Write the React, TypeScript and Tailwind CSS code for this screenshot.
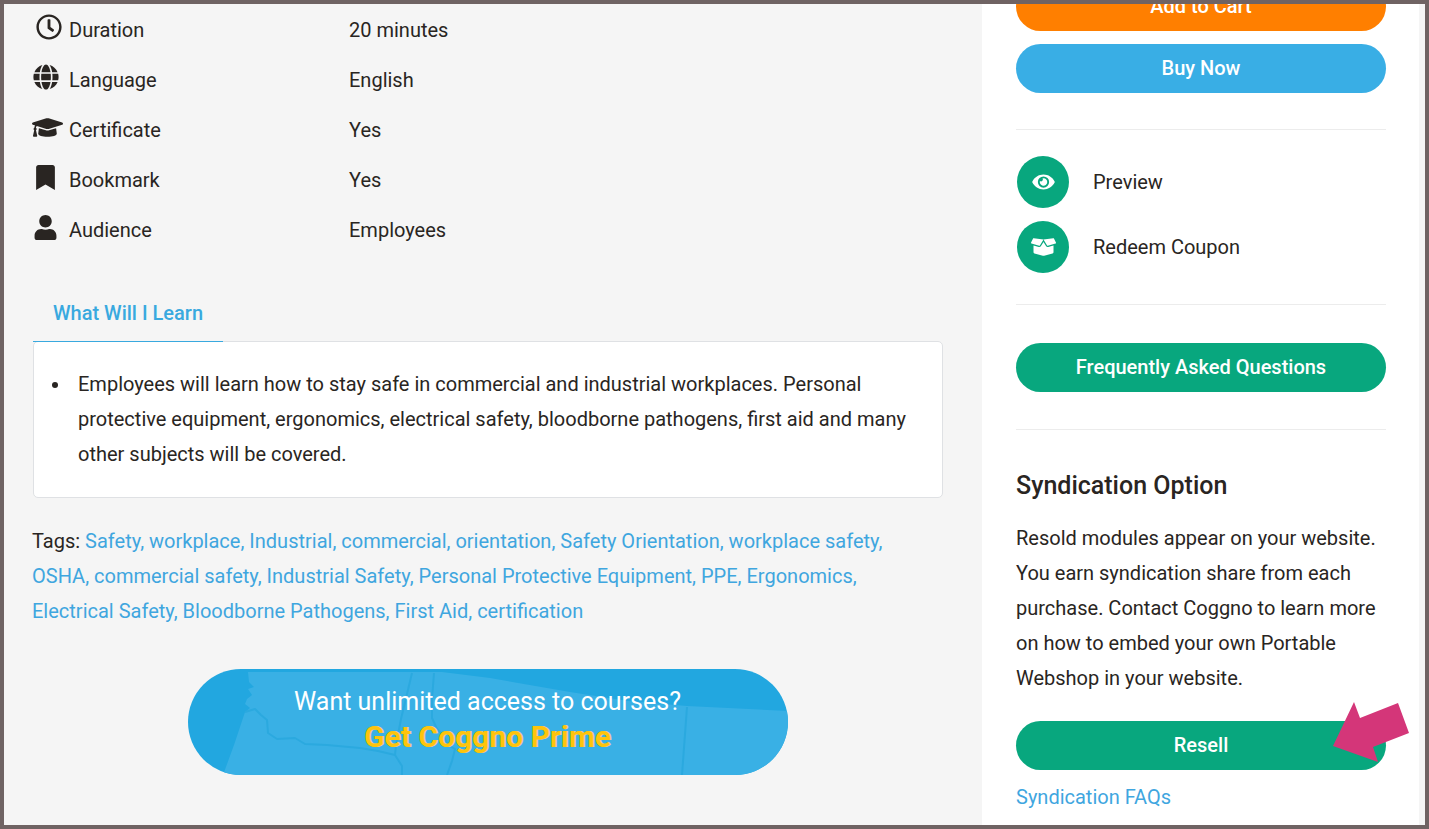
import type { ReactNode } from "react";
import type { IconType } from "react-icons";
import {
  FaBookmark,
  FaBoxOpen,
  FaEye,
  FaGlobe,
  FaGraduationCap,
  FaRegClock,
  FaUser,
} from "react-icons/fa";

type Detail = {
  icon: IconType;
  box: string;
  size: string;
  label: string;
  value: string;
};

const details: Detail[] = [
  { icon: FaRegClock, box: "w-[33px]", size: "size-[26px]", label: "Duration", value: "20 minutes" },
  { icon: FaGlobe, box: "w-[27px]", size: "size-[26px]", label: "Language", value: "English" },
  { icon: FaGraduationCap, box: "w-[31px]", size: "h-[25px] w-[31px]", label: "Certificate", value: "Yes" },
  { icon: FaBookmark, box: "w-[27px]", size: "size-[25px]", label: "Bookmark", value: "Yes" },
  { icon: FaUser, box: "w-[27px]", size: "size-[25px]", label: "Audience", value: "Employees" },
];

const tags = [
  "Safety",
  "workplace",
  "Industrial",
  "commercial",
  "orientation",
  "Safety Orientation",
  "workplace safety",
  "OSHA",
  "commercial safety",
  "Industrial Safety",
  "Personal Protective Equipment",
  "PPE",
  "Ergonomics",
  "Electrical Safety",
  "Bloodborne Pathogens",
  "First Aid",
  "certification",
];

function PillButton({ color, children }: { color: string; children: ReactNode }) {
  return (
    <button
      type="button"
      className={`block h-[49px] w-full rounded-full pb-0.5 text-xl font-medium text-white ${color}`}
    >
      {children}
    </button>
  );
}

function ActionLink({ icon: Icon, label }: { icon: IconType; label: string }) {
  return (
    <a href="#" className="flex items-center gap-6">
      <span className="ml-px flex size-[52px] items-center justify-center rounded-full bg-[#08a77e] text-white">
        <Icon className="h-5 w-[25px]" />
      </span>
      {label}
    </a>
  );
}

function DetailsTable() {
  return (
    <table className="w-full table-fixed border-collapse">
      <tbody>
        {details.map(({ icon: Icon, box, size, label, value }) => (
          <tr key={label} className="h-[50px]">
            <th scope="row" className="w-[317px] p-0 text-left font-normal">
              <span className="flex items-center">
                <span className="w-[37px] shrink-0 pb-1.5">
                  <span className={`flex justify-center ${box}`}>
                    <Icon className={`shrink-0 ${size}`} />
                  </span>
                </span>
                {label}
              </span>
            </th>
            <td className="p-0">{value}</td>
          </tr>
        ))}
      </tbody>
    </table>
  );
}

function PrimeBanner() {
  return (
    <a
      href="#"
      className="relative mx-auto mt-10 flex h-[106px] w-full max-w-[600px] flex-col items-center overflow-hidden rounded-full bg-[#22a7e0] pt-[15px]"
    >
      <svg
        aria-hidden="true"
        viewBox="0 0 600 106"
        preserveAspectRatio="none"
        className="absolute inset-0 size-full"
      >
        <path
          fill="#39b0e5"
          d="M60 3H254L302 9L382 23L440 32L499 37L600 42V106H35L46 76L57 43L62 39L57 35L59 30L64 26L60 20L66 18L61 13Z"
        />
        <g fill="none" stroke="#2ba9df" strokeWidth="2" strokeLinejoin="round">
          <path d="M57 43L67 40L73 46L79 51L80 64L89 70L107 69L117 75L139 76L172 79L190 82L207 86" />
          <path d="M224 4L219 25L213 50L208 76L207 86L214 97V106" />
          <path d="M246 4L244 30V49L249 60L255 66L260 76L267 80L264 92L259 106" />
          <path d="M499 38L494 106" />
        </g>
      </svg>
      <span className="relative text-[25px] leading-9 text-white">
        Want unlimited access to courses?
      </span>
      <span className="relative text-[30px] leading-[34px] font-bold text-[#fec40c] [text-shadow:1px_0_0_#e3c09c]">
        Get Coggno Prime
      </span>
    </a>
  );
}

export default function App() {
  return (
    <div className="flex min-h-screen overflow-hidden border-4 border-[#6f6363] bg-[#f5f5f5] pr-1.5 font-['Roboto','Liberation_Sans',sans-serif] text-xl text-[#292522]">
      <main className="min-w-0 flex-1 pt-px pr-[39px] pl-7">
        <DetailsTable />

        <section className="mt-[30px] ml-px">
          <div role="tablist" className="flex">
            <button
              type="button"
              role="tab"
              aria-selected="true"
              className="relative z-10 -mb-px h-[57px] w-[190px] border-b border-[#39a9df] font-medium text-[#39a9df]"
            >
              What Will I Learn
            </button>
          </div>
          <div
            role="tabpanel"
            className="rounded-[5px] border border-[#dfe1e4] bg-white pt-[25px] pr-8 pb-[25px] pl-11 leading-[35px]"
          >
            <ul>
              <li className="relative before:absolute before:top-[15px] before:-left-[26px] before:size-1.5 before:rounded-full before:bg-[#292522]">
                Employees will learn how to stay safe in commercial and industrial
                workplaces. Personal protective equipment, ergonomics, electrical
                safety, bloodborne pathogens, first aid and many other subjects will
                be covered.
              </li>
            </ul>
          </div>
        </section>

        <p className="mt-[26px] leading-[35px]">
          Tags:{" "}
          {tags.map((tag, index) => (
            <span key={tag} className="text-[#3fa6df]">
              <a href="#">{tag}</a>
              {index < tags.length - 1 ? ", " : ""}
            </span>
          ))}
        </p>

        <PrimeBanner />
      </main>

      <aside className="w-[437px] shrink-0 bg-white pr-[33px] pl-[34px]">
        <div className="-mt-[22px] flex flex-col gap-[13px]">
          <PillButton color="bg-[#ff7f00]">Add to Cart</PillButton>
          <PillButton color="bg-[#39aee5]">Buy Now</PillButton>
        </div>

        <div className="mt-9 flex flex-col gap-[13px] border-y border-[#ececec] pt-[26px] pb-[31px]">
          <ActionLink icon={FaEye} label="Preview" />
          <ActionLink icon={FaBoxOpen} label="Redeem Coupon" />
        </div>

        <div className="border-b border-[#ececec] pt-[38px] pb-[37px]">
          <PillButton color="bg-[#08a77e]">Frequently Asked Questions</PillButton>
        </div>

        <h2 className="mt-[38px] text-[25px] leading-9 font-medium">Syndication Option</h2>
        <p className="mt-[17px] leading-[35px]">
          Resold modules appear on your website. You earn syndication share from each
          purchase. Contact Coggno to learn more on how to embed your own Portable
          Webshop in your website.
        </p>

        <div className="relative mt-[25px]">
          <PillButton color="bg-[#08a77e]">Resell</PillButton>
          <svg
            aria-hidden="true"
            viewBox="0 0 76 60"
            className="absolute -top-[19px] -right-[23px] h-[60px] w-[76px]"
          >
            <path fill="#d43679" d="M0 44L21 0L27 16L65 1L76 31L40 45L45 60Z" />
          </svg>
        </div>
        <a href="#" className="mt-2.5 block leading-[35px] text-[#3fa6df]">
          Syndication FAQs
        </a>
      </aside>
    </div>
  );
}
